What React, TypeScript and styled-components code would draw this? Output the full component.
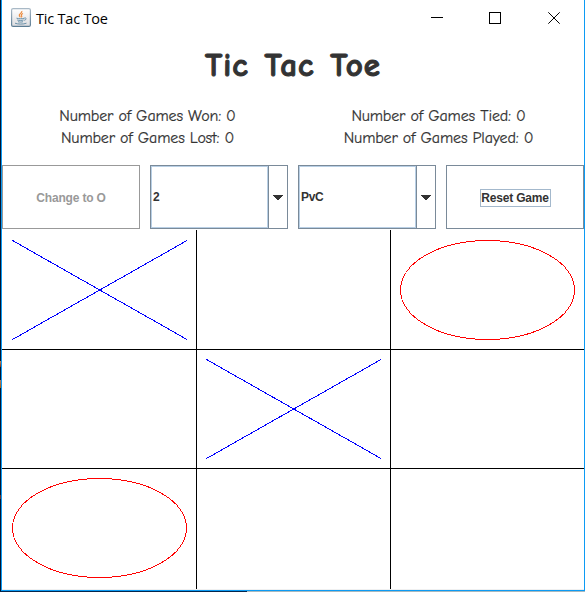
import React from "react";
import styled, { createGlobalStyle } from "styled-components";

const GlobalStyle = createGlobalStyle`
  * { box-sizing: border-box; }
  body { margin: 0; background: #021c3c; overflow: hidden; }
`;

const Desktop = styled.div`
  width: 585px;
  height: 592px;
  padding: 0 0 1px 1px;
  background: linear-gradient(90deg, #04264c 0 247px, #a9b9be 247px) bottom / 100% 1px no-repeat,
    linear-gradient(#c8885a, #7a2a10) 0 361px / 1px 6px no-repeat,
    linear-gradient(#b07a68, #a85c08) 0 380px / 1px 8px no-repeat,
    linear-gradient(#6a3028, #6a3028) 0 495px / 1px 4px no-repeat, #021530;
`;

const Window = styled.main`
  display: flex;
  flex-direction: column;
  height: 591px;
  border: solid #0c9bf4;
  border-width: 0 1px 1px 1px;
  background: #fff;
  color: #333;
`;

const TitleBar = styled.header`
  display: flex;
  align-items: center;
  height: 36px;
  padding: 0 24px 0 9px;
`;

const WindowTitle = styled.span`
  flex: 1;
  margin-left: 5px;
  padding-top: 1px;
  font: 14.5px/20px "Open Sans", "Noto Sans", sans-serif;
  letter-spacing: -0.2px;
  color: #000;
`;

const Controls = styled.div`
  display: flex;
  gap: 46px;
  svg { display: block; }
  svg:last-child { margin-left: 1px; }
`;

const Heading = styled.h1`
  height: 66px;
  margin: 0;
  padding-top: 7px;
  text-align: center;
  font: 900 33px/44px "Comic Sans MS", "Comic Neue", Lato, sans-serif;
  letter-spacing: 1px;
  word-spacing: 3px;
  -webkit-text-stroke: 1px #333;
`;

const Scores = styled.section`
  display: grid;
  grid-template-columns: 291px 291px;
  grid-auto-rows: 22px;
  height: 63px;
  padding-top: 3px;
`;

const Score = styled.div`
  text-align: center;
  white-space: nowrap;
  font: 16px/22px "Comic Sans MS", "Comic Neue", Lato, sans-serif;
  letter-spacing: -0.16px;
  -webkit-text-stroke: 0.2px #333;
`;

const Toolbar = styled.div`
  display: grid;
  grid-template-columns: repeat(4, 138px);
  gap: 10px;
  height: 64px;
  margin-bottom: 1px;
`;

const Button = styled.button`
  display: flex;
  align-items: center;
  justify-content: center;
  padding: 2px 0 0;
  border: 1px solid #7a8a99;
  border-radius: 0;
  background: #fff;
  font: bold 12px/16px "Liberation Sans", Arial, sans-serif;
  letter-spacing: -0.17px;
  color: #333;
  &:disabled { border-color: #999; color: #999; }
`;

const FocusRing = styled.span`
  width: 71px;
  height: 18px;
  border: 1px solid #a3b8cc;
  white-space: nowrap;
  letter-spacing: -0.2px;
`;

const Combo = styled.div`
  display: flex;
  border: 1px solid #7a8a99;
`;

const ComboValue = styled.div`
  display: flex;
  flex: 1;
  align-items: center;
  padding: 0 1px 1px;
  border: 1px solid #b8cfe5;
  font: bold 12px/16px "Liberation Sans", Arial, sans-serif;
  letter-spacing: -0.3px;
`;

const ComboArrow = styled.div`
  display: flex;
  align-items: center;
  justify-content: center;
  width: 19px;
  padding-top: 1px;
  border-left: 1px solid #7a8a99;
`;

const Board = styled.section`
  display: grid;
  grid-template-columns: repeat(3, 194px);
  grid-template-rows: 119px 119px 121px;
  height: 360px;
  padding-bottom: 1px;
  background: linear-gradient(#f0f0f0, #f0f0f0) bottom / 100% 1px no-repeat;
`;

const Cell = styled.div<{ $left: boolean; $top: boolean }>`
  padding: 10px;
  box-shadow: inset ${(p) => (p.$left ? 1 : 0)}px 0 #000, inset 0 ${(p) => (p.$top ? 1 : 0)}px #000;
  svg { display: block; }
`;

function JavaIcon() {
  return (
    <svg width="20" height="20" viewBox="0 0 20 20" fill="none">
      <defs>
        <linearGradient id="tile" x1="0" y1="0" x2="0" y2="1">
          <stop stopColor="#fff" />
          <stop offset="1" stopColor="#dcdcdf" />
        </linearGradient>
        <linearGradient id="rim" x1="0" y1="0" x2="0" y2="1">
          <stop stopColor="#a9b9c6" />
          <stop offset="1" stopColor="#5d7d94" />
        </linearGradient>
      </defs>
      <rect x=".6" y=".6" width="18.8" height="17.8" rx="1.5" fill="url(#tile)" stroke="url(#rim)" strokeWidth="1.2" />
      <path d="M10.8 3c.8 2-3.2 2.700-2.500 4.500.2.700.9 1 .9 1.700M12 5.500C9.800 6.500 10 7 10.700 8c.3.600 0 1-.5 1.400" stroke="#ec8a3c" strokeWidth="1.200" />
      <path d="M5.500 10.200c2 .7 6 .7 8 0M6.200 12c2 .6 4.500.6 6.400 0M7 13.700c1.800.5 3.500.5 5 0M13.500 10c2.500-.4 2 1.800-.3 2.300M4 15.200c2.500 1.100 8.500 1.200 11.500 0" stroke="#55829f" strokeWidth="1" strokeOpacity=".85" />
    </svg>
  );
}

function Mark({ kind }: { kind: "X" | "O" }) {
  return (
    <svg width="176" height="101" viewBox="0 0 176 101" fill="none" shapeRendering="crispEdges">
      {kind === "X" ? (
        <path d="M.5.5 175 99.500M.5 99.500 175 .5" stroke="#00f" />
      ) : (
        <ellipse cx="87.500" cy="50" rx="87" ry="49.500" stroke="#f00" />
      )}
    </svg>
  );
}

function Dropdown({ value }: { value: string }) {
  return (
    <Combo role="combobox">
      <ComboValue>{value}</ComboValue>
      <ComboArrow>
        <svg width="10" height="5" viewBox="0 0 10 5" shapeRendering="crispEdges">
          <path d="M0 0h10v1H9v1H8v1H7v1H6v1H4V4H3V3H2V2H1V1H0z" fill="#333" />
        </svg>
      </ComboArrow>
    </Combo>
  );
}

const scores = [
  "Number of Games Won: 0",
  "Number of Games Tied: 0",
  "Number of Games Lost: 0",
  "Number of Games Played: 0",
];

const cells: ("X" | "O" | null)[] = ["X", null, "O", null, "X", null, "O", null, null];

export default function App() {
  return (
    <>
      <GlobalStyle />
      <Desktop>
        <Window>
          <TitleBar>
            <JavaIcon />
            <WindowTitle>Tic Tac Toe</WindowTitle>
            <Controls>
              <svg width="12" height="12" shapeRendering="crispEdges">
                <path d="M0 5.500h12" stroke="#000" />
              </svg>
              <svg width="12" height="12" shapeRendering="crispEdges">
                <rect x=".5" y=".5" width="11" height="11" fill="none" stroke="#000" />
              </svg>
              <svg width="12" height="12">
                <path d="M.3.3l11.400 11.400M11.700.3L.3 11.700" stroke="#000" />
              </svg>
            </Controls>
          </TitleBar>
          <Heading>Tic Tac Toe</Heading>
          <Scores>
            {scores.map((label) => (
              <Score key={label}>{label}</Score>
            ))}
          </Scores>
          <Toolbar>
            <Button disabled>Change to O</Button>
            <Dropdown value="2" />
            <Dropdown value="PvC" />
            <Button><FocusRing>Reset Game</FocusRing></Button>
          </Toolbar>
          <Board>
            {cells.map((kind, i) => (
              <Cell key={i} $left={i % 3 > 0} $top={i > 2}>
                {kind && <Mark kind={kind} />}
              </Cell>
            ))}
          </Board>
        </Window>
      </Desktop>
    </>
  );
}
